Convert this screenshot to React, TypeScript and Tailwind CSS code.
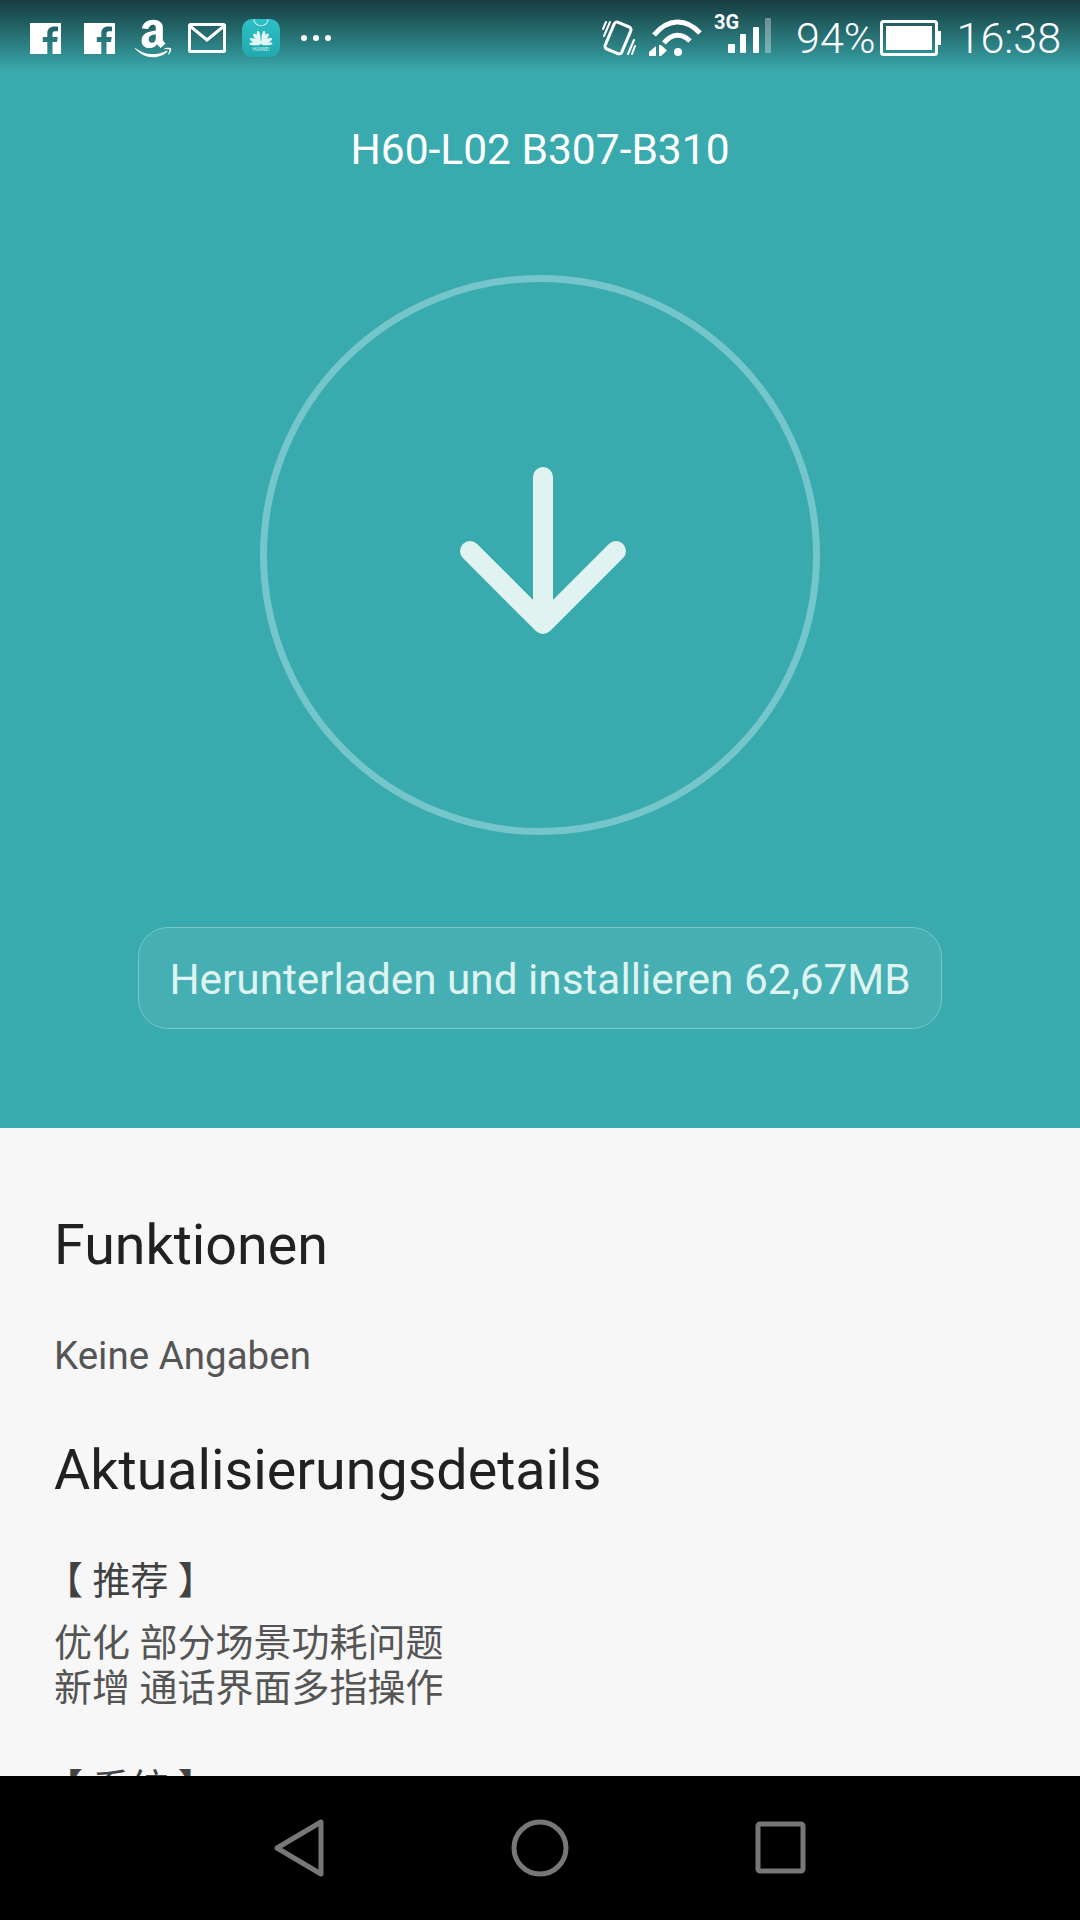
import React from "react";
import { FaAmazon } from "react-icons/fa";

const cjk = "font-['Roboto','Noto_Sans_CJK_SC',sans-serif]";

function FbIcon() {
  return (
    <svg width="31" height="31" viewBox="0 0 31 31" fill="white">
      <path
        fillRule="evenodd"
        d="M0 0H31V31H22.5V19H27L27.7 14H22.5V11C22.5 9.3 23.2 8.3 25 8.3H28V3.8C27 3.7 25.8 3.6 24.3 3.6C20.2 3.6 17.3 6 17.3 10.5V14H12.8V19H17.3V31H0Z"
      />
    </svg>
  );
}

function MailIcon() {
  return (
    <svg width="38" height="30" viewBox="0 0 38 30" fill="none" stroke="white" strokeWidth="3">
      <rect x="1.5" y="1.5" width="35" height="27" rx="1" />
      <path d="M2 3L19 17L36 3" />
    </svg>
  );
}

function HuaweiAppIcon() {
  return (
    <svg width="38" height="38" viewBox="0 0 38 38">
      <defs>
        <linearGradient id="hw" x1="0" y1="0" x2="0" y2="1">
          <stop offset="0" stopColor="#2cc0c6" />
          <stop offset="1" stopColor="#21a9ae" />
        </linearGradient>
      </defs>
      <rect width="38" height="38" rx="10" fill="url(#hw)" />
      <path d="M12 0C12 9 26 9 26 0" fill="none" stroke="#bfe9ea" strokeWidth="1.2" />
      <g fill="#e2f6f6">
        <ellipse cx="17.3" cy="18" rx="1.9" ry="6.5" transform="rotate(-6 19 25)" />
        <ellipse cx="20.7" cy="18" rx="1.9" ry="6.5" transform="rotate(6 19 25)" />
        <ellipse cx="19" cy="18.5" rx="2" ry="6.2" transform="rotate(-36 19 25)" />
        <ellipse cx="19" cy="18.5" rx="2" ry="6.2" transform="rotate(36 19 25)" />
        <ellipse cx="19" cy="18.5" rx="1.9" ry="6" transform="rotate(-64 19 25)" />
        <ellipse cx="19" cy="18.5" rx="1.9" ry="6" transform="rotate(64 19 25)" />
        <ellipse cx="19" cy="19" rx="1.5" ry="5.5" transform="rotate(-88 19 25)" />
        <ellipse cx="19" cy="19" rx="1.5" ry="5.5" transform="rotate(88 19 25)" />
      </g>
      <text x="19" y="31.5" textAnchor="middle" fontSize="4.6" fill="#d6f3f3" fontFamily="Roboto, sans-serif">
        HUAWEI
      </text>
    </svg>
  );
}

function VibrateIcon() {
  return (
    <svg width="34" height="38" viewBox="0 0 34 38" fill="none" stroke="white" strokeLinecap="round">
      <rect x="7" y="4.5" width="18" height="29" rx="3" strokeWidth="3" transform="rotate(23 16 19)" />
      <path d="M1 10L4 3" strokeWidth="2" />
      <path d="M2 17L8 3" strokeWidth="2" />
      <path d="M33 27L30 35" strokeWidth="2" />
      <path d="M32 21L26 35" strokeWidth="2" />
    </svg>
  );
}

function WifiIcon() {
  return (
    <svg width="54" height="38" viewBox="0 0 54 38" fill="none" stroke="white" strokeWidth="5">
      <path d="M5 16C19 -1 37 -1 51 14" />
      <path d="M15 24C23 14 33 14 41 22" />
      <circle cx="29" cy="33" r="4" fill="white" stroke="none" />
      <path d="M7 27L0 33V37H7Z" fill="white" stroke="none" />
      <path d="M10 26V37H12L18 31.5L12 26Z" fill="white" stroke="none" />
    </svg>
  );
}

function SignalIcon() {
  return (
    <div className="relative w-[57px] h-[40px]">
      <span className="absolute left-0 top-[-1px] font-['Roboto',sans-serif] font-bold text-[20px] leading-[20px] text-white">
        3G
      </span>
      <svg className="absolute left-[14px] top-[5px]" width="43" height="35" viewBox="0 0 43 35" fill="white">
        <rect x="0" y="26" width="7" height="9" rx="1" />
        <rect x="12" y="16" width="6" height="19" rx="1" />
        <rect x="25" y="9" width="6" height="26" rx="1" />
        <rect x="37" y="0" width="6" height="35" rx="1" opacity="0.35" />
      </svg>
    </div>
  );
}

function BatteryIcon() {
  return (
    <svg width="61" height="36" viewBox="0 0 61 36">
      <rect x="1.5" y="1.5" width="55" height="33" rx="2" fill="none" stroke="white" strokeWidth="3" />
      <rect x="6" y="6" width="46" height="24" fill="white" />
      <path d="M58 11H61V25H58Z" fill="white" />
    </svg>
  );
}

function StatusBar() {
  return (
    <div className="h-[72px] flex items-start justify-between pl-[30px] pr-[19px] bg-gradient-to-b from-[#163d40] to-[#39abae]">
      <div className="flex items-center h-[76px] gap-[23px]">
        <FbIcon />
        <FbIcon />
        <FaAmazon className="text-white w-[38px] h-[43px] -ml-[4px]" />
        <div className="-ml-[7px]">
          <MailIcon />
        </div>
        <div className="-ml-[7px]">
          <HuaweiAppIcon />
        </div>
        <div className="flex gap-[6px] -ml-[2px]">
          <span className="w-[6px] h-[6px] rounded-full bg-white" />
          <span className="w-[6px] h-[6px] rounded-full bg-white" />
          <span className="w-[6px] h-[6px] rounded-full bg-white" />
        </div>
      </div>
      <div className="flex items-center h-[76px] text-white font-['Roboto',sans-serif] font-light text-[43px]">
        <VibrateIcon />
        <div className="ml-[13px]">
          <WifiIcon />
        </div>
        <div className="ml-[11px] -mt-[10px]">
          <SignalIcon />
        </div>
        <span className="ml-[25px]">94%</span>
        <div className="ml-[4px]">
          <BatteryIcon />
        </div>
        <span className="ml-[16px]">16:38</span>
      </div>
    </div>
  );
}

function DownloadRing() {
  return (
    <div className="relative w-[560px] h-[560px] rounded-full border-[7px] border-[#74c6ca]">
      <svg className="absolute left-[179px] top-[163px]" width="190" height="190" viewBox="0 0 190 190" fill="none">
        <path
          d="M97 32V179M24 106L97 179L170 106"
          stroke="#e0f3f1"
          strokeWidth="20"
          strokeLinecap="round"
          strokeLinejoin="round"
        />
      </svg>
    </div>
  );
}

export default function App() {
  return (
    <div className={`w-[1080px] h-[1920px] overflow-hidden flex flex-col bg-black ${cjk}`}>
      <div className="h-[1128px] shrink-0 bg-[#39abae] flex flex-col">
        <StatusBar />
        <div className="text-center text-white text-[42.5px] leading-[48px] mt-[54px]">H60-L02 B307-B310</div>
        <div className="flex justify-center mt-[101px]">
          <DownloadRing />
        </div>
        <div className="mx-auto mt-[92px] w-[804px] h-[102px] pt-[4px] rounded-[30px] border border-[#79c6c9] bg-[#45afb3] flex items-center justify-center text-[#dff3f1] text-[42.3px]">
          Herunterladen und installieren 62,67MB
        </div>
      </div>

      <div className="h-[648px] shrink-0 overflow-hidden bg-[#f7f7f7] pl-[54px] pt-[87px]">
        <div className="text-[#212121] text-[55.6px] leading-[60px]">Funktionen</div>
        <div className="text-[#555555] text-[38.5px] leading-[44px] mt-[59px]">Keine Angaben</div>
        <div className="text-[#212121] text-[55.6px] leading-[60px] mt-[62px]">Aktualisierungsdetails</div>
        <div className="text-[#424242] text-[38px] leading-[45px] mt-[59px] -ml-[9px]">【 推荐 】</div>
        <div className="text-[#555555] text-[38px] leading-[45px] mt-[17px]">
          <div>优化 部分场景功耗问题</div>
          <div>新增 通话界面多指操作</div>
        </div>
        <div className="text-[#424242] text-[38px] leading-[45px] mt-[55px] -ml-[9px]">【 系统 】</div>
      </div>

      <div className="h-[144px] shrink-0 bg-black flex items-center justify-center">
        <svg width="540" height="60" viewBox="0 0 540 60" fill="none" stroke="#777777" strokeWidth="5" strokeLinejoin="round">
          <path d="M7 30L51 4V56Z" />
          <circle cx="270" cy="30" r="26" />
          <rect x="488" y="6" width="45" height="47" rx="2" />
        </svg>
      </div>
    </div>
  );
}
